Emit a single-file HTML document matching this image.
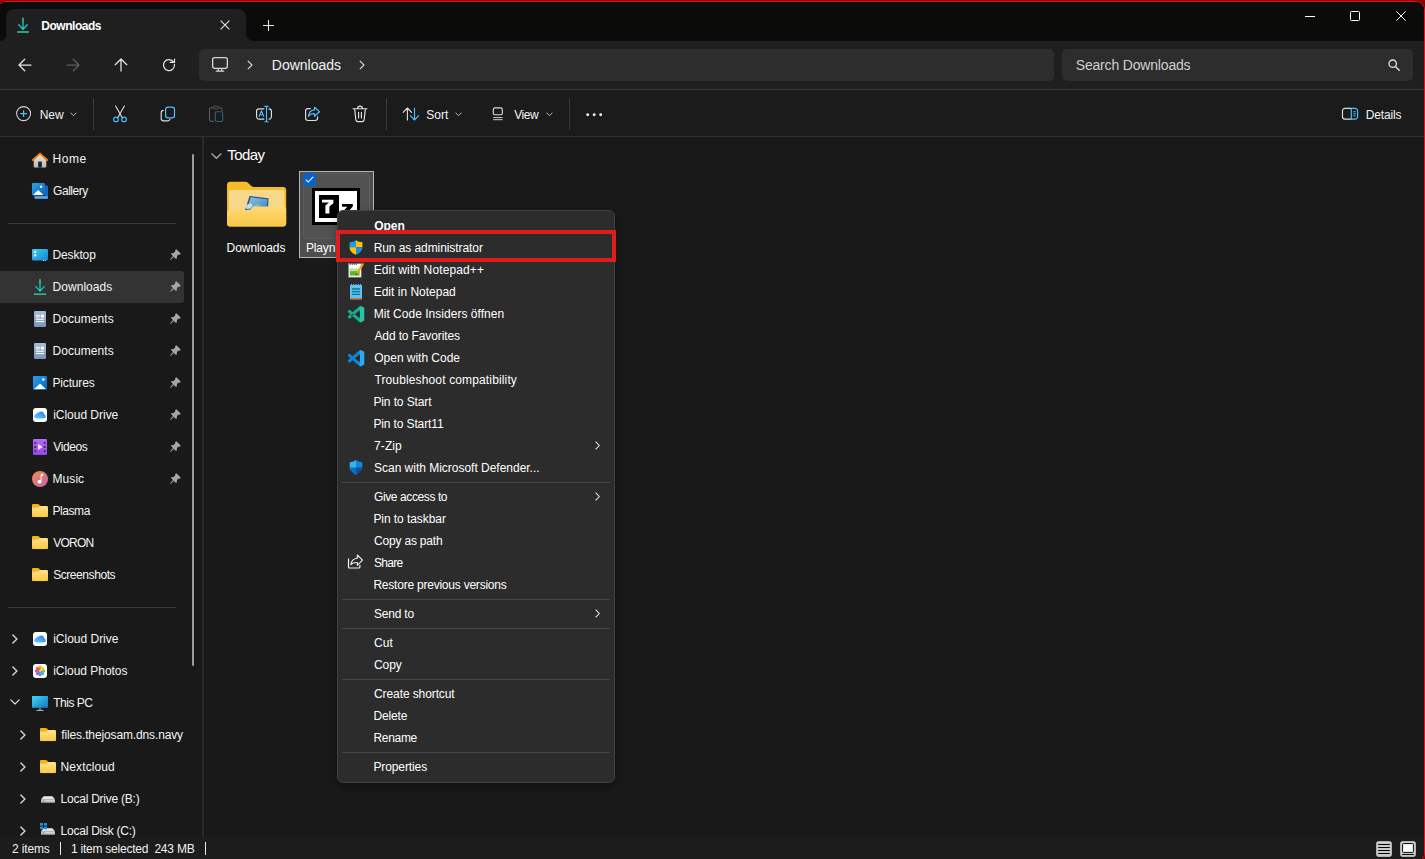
<!DOCTYPE html>
<html lang="en">
<head>
<meta charset="utf-8">
<title>Downloads - File Explorer</title>
<style>
*{box-sizing:border-box;margin:0;padding:0}
html,body{width:1425px;height:859px;overflow:hidden;background:#8a0000}
body{font-family:"Liberation Sans",sans-serif;font-size:12px;color:#fff;position:relative;-webkit-font-smoothing:antialiased}
.abs{position:absolute}
svg{display:block;overflow:visible}
/* window frame */
#frame{position:absolute;left:-3px;top:1px;width:1428px;height:861px;border:1px solid #e81123;border-radius:9px;background:#0b0b0a;overflow:hidden}
#win{position:absolute;left:2px;top:-2px;width:1425px;height:859px}
/* bars */
#tabstrip{left:0;top:2px;width:1424px;height:39px;background:#0b0b0a}
#tab{left:6px;top:9px;width:240px;height:32px;background:#201f1f;border-radius:8px 8px 0 0}
.flare{width:8px;height:8px;top:33px;background:#201f1f}
.flare i{display:block;width:8px;height:8px;background:#0b0b0a}
#navbar{left:0;top:41px;width:1424px;height:48px;background:#201f1f}
#addr{left:199px;top:49px;width:855px;height:32px;background:#2d2d2d;border-radius:5px}
#search{left:1062px;top:49px;width:350.500px;height:32px;background:#2d2d2d;border-radius:5px}
#navline{left:0;top:89px;width:1424px;height:1px;background:#3a3a3a}
#toolbar{left:0;top:90px;width:1424px;height:46px;background:#1b1b1b}
#toolline{left:0;top:136px;width:1424px;height:1px;background:#303030}
#main{left:0;top:137px;width:1424px;height:700px;background:#191919}
#sidediv{left:202px;top:137px;width:2px;height:700px;background:#292929}
#status{left:0;top:837px;width:1424px;height:22px;background:#1c1c1c}
.vsep{top:98px;width:1px;height:32px;background:#393939}
.tb{font-size:12px;color:#f4f4f4}
.st{color:#f4f4f4}
.mt{color:#fff}
.ss{color:#f0f0f0}
.t{position:absolute;white-space:nowrap;line-height:16px;height:16px}
/* per-text fitting */
#s0{letter-spacing:0.590px;margin-left:-0.51px}
#s1{letter-spacing:-0.477px;margin-left:0.11px}
#s2{letter-spacing:-0.113px;margin-left:-0.51px}
#s3{letter-spacing:0.055px;margin-left:-0.51px}
#s4{letter-spacing:0.064px;margin-left:-0.51px}
#s5{letter-spacing:0.064px;margin-left:-0.51px}
#s6{letter-spacing:-0.166px;margin-left:-0.51px}
#s7{letter-spacing:-0.017px;margin-left:0.13px}
#s8{letter-spacing:-0.374px;margin-left:0.26px}
#s9{letter-spacing:0.072px;margin-left:-0.51px}
#s10{letter-spacing:-0.431px;margin-left:-0.51px}
#s11{letter-spacing:-0.750px;margin-left:0.26px}
#s12{letter-spacing:-0.422px;margin-left:0.13px}
#s13{letter-spacing:-0.010px;margin-left:0.20px}
#s14{letter-spacing:-0.036px;margin-left:0.20px}
#s15{letter-spacing:-0.514px;margin-left:0.29px}
#s16{letter-spacing:-0.134px;margin-left:0.30px}
#s17{letter-spacing:0.106px;margin-left:-0.44px}
#s18{letter-spacing:-0.237px;margin-left:-0.44px}
#s19{letter-spacing:-0.247px;margin-left:-0.41px}
#m0{letter-spacing:-0.075px;margin-left:0.30px}
#m1{letter-spacing:-0.079px;margin-left:-0.32px}
#m2{letter-spacing:0.125px;margin-left:-0.32px}
#m3{letter-spacing:0.003px;margin-left:-0.32px}
#m4{letter-spacing:0.023px;margin-left:-0.32px}
#m5{letter-spacing:-0.127px;margin-left:0.49px}
#m6{letter-spacing:-0.031px;margin-left:0.30px}
#m7{letter-spacing:0.141px;margin-left:0.38px}
#m8{letter-spacing:-0.113px;margin-left:-0.60px}
#m9{letter-spacing:-0.127px;margin-left:-0.60px}
#m10{letter-spacing:0.100px;margin-left:0.04px}
#m11{letter-spacing:-0.016px;margin-left:0.00px}
#m12{letter-spacing:-0.399px;margin-left:0.04px}
#m13{letter-spacing:-0.066px;margin-left:-0.60px}
#m14{letter-spacing:-0.192px;margin-left:0.04px}
#m15{letter-spacing:-0.685px;margin-left:0.00px}
#m16{letter-spacing:-0.224px;margin-left:-0.60px}
#m17{letter-spacing:-0.212px;margin-left:0.00px}
#m18{letter-spacing:0.106px;margin-left:0.04px}
#m19{letter-spacing:-0.116px;margin-left:0.04px}
#m20{letter-spacing:-0.100px;margin-left:0.04px}
#m21{letter-spacing:-0.125px;margin-left:-0.60px}
#m22{letter-spacing:-0.300px;margin-left:-0.60px}
#m23{letter-spacing:-0.102px;margin-left:-0.60px}
#tnew{letter-spacing:-0.068px;margin-left:-0.32px}
#tsort{letter-spacing:0.008px;margin-left:-0.69px}
#tview{letter-spacing:-0.475px;margin-left:0.19px}
#tdet{letter-spacing:-0.140px;margin-left:-0.29px}
#tabtxt{letter-spacing:-0.485px;margin-left:0.32px}
#addrtxt{letter-spacing:-0.010px;margin-left:-0.19px}
#searchtxt{letter-spacing:-0.175px;margin-left:-0.28px}
#ctoday{letter-spacing:-0.517px;margin-left:0.16px}
#cdl{letter-spacing:-0.072px;margin-left:-0.42px}
#st0{letter-spacing:-0.154px;margin-left:0.04px}
#st1{letter-spacing:-0.226px;margin-left:-0.11px}
</style>
</head>
<body>
<div id="frame"><div id="win">

<div class="abs" id="tabstrip"></div>
<div class="abs" id="tab"></div>
<div class="abs flare" style="left:-1px"><i style="border-radius:0 0 8px 0"></i></div>
<div class="abs flare" style="left:246px"><i style="border-radius:0 0 0 8px"></i></div>
<div class="abs" id="navbar"></div>
<div class="abs" id="addr"></div>
<div class="abs" id="search"></div>
<div class="abs" id="navline"></div>
<div class="abs" id="toolbar"></div>
<div class="abs" id="toolline"></div>
<div class="abs" id="main"></div>
<div class="abs" id="sidediv"></div>
<div class="abs" id="status"></div>

<!-- tab icon: download arrow -->
<svg class="abs" style="left:16px;top:17px" width="14" height="16" viewBox="0 0 14 16"><defs><linearGradient id="gdl" x1="0" y1="0" x2="0" y2="1"><stop offset="0" stop-color="#3ddc97"/><stop offset=".75" stop-color="#12a5b8"/><stop offset="1" stop-color="#2fd39a"/></linearGradient></defs><path d="M7 .8v11.2M2.3 7.4L7 12.1l4.7-4.7" fill="none" stroke="url(#gdl)" stroke-width="1.5"/><path d="M1.2 15h11.6" stroke="#2fd39a" stroke-width="1.4"/></svg>
<div class="t" id="tabtxt" style="left:41px;top:18px;font-weight:700;font-size:12px;">Downloads</div>
<svg class="abs" style="left:220px;top:20px" width="10" height="10" viewBox="0 0 10 10"><path d="M.6.6l8.8 8.8M9.400.6L.6 9.400" stroke="#e4e4e4" stroke-width="1.1" fill="none"/></svg>
<svg class="abs" style="left:263px;top:20px" width="11" height="11" viewBox="0 0 11 11"><path d="M5.500 0v11M0 5.500h11" stroke="#e4e4e4" stroke-width="1.1" fill="none"/></svg>
<!-- window controls -->
<svg class="abs" style="left:1305px;top:16px" width="10" height="1" viewBox="0 0 10 1"><path d="M0 .5h10" stroke="#fff" stroke-width="1"/></svg>
<svg class="abs" style="left:1350px;top:11px" width="10" height="10" viewBox="0 0 10 10"><rect x=".5" y=".5" width="9" height="9" rx="1" fill="none" stroke="#fff" stroke-width="1"/></svg>
<svg class="abs" style="left:1396px;top:11px" width="10" height="10" viewBox="0 0 10 10"><path d="M.3.3l9.400 9.400M9.700.3L.3 9.700" stroke="#fff" stroke-width="1" fill="none"/></svg>

<!-- back -->
<svg class="abs" style="left:18px;top:58px" width="14" height="14" viewBox="0 0 14 14"><path d="M13 7H1.200M6.700 1.200L1 7l5.700 5.800" fill="none" stroke="#e6e6e6" stroke-width="1.25" stroke-linecap="round" stroke-linejoin="round"/></svg>
<!-- forward (disabled) -->
<svg class="abs" style="left:66px;top:58px" width="14" height="14" viewBox="0 0 14 14"><path d="M1 7h11.800M7.300 1.200L13 7l-5.700 5.800" fill="none" stroke="#5f5f5f" stroke-width="1.25" stroke-linecap="round" stroke-linejoin="round"/></svg>
<!-- up -->
<svg class="abs" style="left:114px;top:58px" width="14" height="14" viewBox="0 0 14 14"><path d="M7 13V1.200M1.200 6.700L7 1l5.800 5.700" fill="none" stroke="#e6e6e6" stroke-width="1.25" stroke-linecap="round" stroke-linejoin="round"/></svg>
<!-- refresh -->
<svg class="abs" style="left:162px;top:58px" width="14" height="14" viewBox="0 0 14 14"><path d="M12.450 6.400A5.500 5.500 0 1 1 11.700 4.200M8.200 4.400H12.500V1.100" fill="none" stroke="#e6e6e6" stroke-width="1.2" stroke-linecap="round" stroke-linejoin="round"/></svg>
<!-- monitor -->
<svg class="abs" style="left:212px;top:57px" width="16" height="15" viewBox="0 0 16 15"><rect x=".65" y=".65" width="14.700" height="10.700" rx="2" fill="none" stroke="#d8d8d8" stroke-width="1.3"/><path d="M6.300 11.400v2.400M9.700 11.400v2.400M3.800 14.200h8.400" stroke="#d8d8d8" stroke-width="1.2" fill="none"/></svg>
<svg class="abs" style="left:247px;top:60px" width="6" height="10" viewBox="0 0 6 10"><path d="M.8.800L5 5 .8 9.200" fill="none" stroke="#dcdcdc" stroke-width="1.1"/></svg>
<div class="t" id="addrtxt" style="left:272px;top:55px;font-size:14px;line-height:20px;height:20px;color:#f2f2f2">Downloads</div>
<svg class="abs" style="left:359px;top:60px" width="6" height="10" viewBox="0 0 6 10"><path d="M.8.800L5 5 .8 9.200" fill="none" stroke="#dcdcdc" stroke-width="1.1"/></svg>
<div class="t" id="searchtxt" style="left:1076px;top:55px;font-size:14px;line-height:20px;height:20px;color:#cfcfcf">Search Downloads</div>
<svg class="abs" style="left:1388px;top:59px" width="12" height="12" viewBox="0 0 12 12"><circle cx="4.700" cy="4.700" r="3.700" fill="none" stroke="#e0e0e0" stroke-width="1.3"/><path d="M7.500 7.500l3.700 3.700" stroke="#e0e0e0" stroke-width="1.400" stroke-linecap="round"/></svg>

<!-- New -->
<svg class="abs" style="left:16px;top:106px" width="16" height="16" viewBox="0 0 16 16"><circle cx="7.600" cy="7.600" r="7" fill="none" stroke="#d6d6d6" stroke-width="1.05"/><path d="M7.600 4.200v6.800M4.200 7.600h6.800" stroke="#4cc2ff" stroke-width="1.15" fill="none"/></svg>
<div class="t tb" id="tnew" style="left:40px;top:107px">New</div>
<svg class="abs" style="left:70px;top:112px" width="7" height="5" viewBox="0 0 7 5"><path d="M.6.700l2.900 3 2.900-3" fill="none" stroke="#b8b8b8" stroke-width="1"/></svg>
<div class="abs vsep" style="left:93px"></div>
<!-- Cut -->
<svg class="abs" style="left:112px;top:105px" width="16" height="18" viewBox="0 0 16 18"><path d="M3.600 1l6.700 11.700M12.400 1L5.700 12.700" stroke="#e2e2e2" stroke-width="1.1" fill="none" stroke-linecap="round"/><circle cx="4" cy="14.400" r="2.300" fill="none" stroke="#4cc2ff" stroke-width="1.15"/><circle cx="12" cy="14.400" r="2.300" fill="none" stroke="#4cc2ff" stroke-width="1.15"/></svg>
<!-- Copy -->
<svg class="abs" style="left:160px;top:106px" width="16" height="16" viewBox="0 0 16 16"><path d="M3.300 4.400A2.300 2.300 0 0 0 1.200 6.700v5.800a2.400 2.400 0 0 0 2.400 2.400h4.200a2.300 2.300 0 0 0 2.200-1.700" fill="none" stroke="#dedede" stroke-width="1.15" stroke-linecap="round"/><rect x="5.600" y="1.100" width="8.900" height="10.700" rx="2.300" fill="none" stroke="#4cc2ff" stroke-width="1.2"/></svg>
<!-- Paste (disabled) -->
<svg class="abs" style="left:208px;top:105px" width="16" height="18" viewBox="0 0 16 18"><path d="M5.200 2.700H3.400A1.900 1.900 0 0 0 1.500 4.600v9.900a1.900 1.900 0 0 0 1.900 1.900h2.200M10.800 2.700h1.400a1.900 1.900 0 0 1 1.900 1.900v1.200" fill="none" stroke="#5c5c5c" stroke-width="1.1"/><rect x="5.100" y="1.300" width="5.700" height="2.500" rx="1.200" fill="none" stroke="#5c5c5c" stroke-width="1"/><rect x="7.300" y="6.700" width="7.400" height="9.800" rx="1.500" fill="none" stroke="#2b6283" stroke-width="1.15"/></svg>
<!-- Rename -->
<svg class="abs" style="left:255px;top:105px" width="18" height="18" viewBox="0 0 18 18"><path d="M9.300 3.900H3.900A2.300 2.300 0 0 0 1.600 6.200v5.600a2.300 2.300 0 0 0 2.300 2.300h5.400M13.600 3.900h.5a2.300 2.300 0 0 1 2.300 2.300v5.600a2.300 2.300 0 0 1-2.300 2.300h-.5" fill="none" stroke="#dedede" stroke-width="1.15"/><path d="M11.500 1.300v15.400M9.500 1.300h4M9.500 16.700h4" stroke="#4cc2ff" stroke-width="1.15" fill="none"/><path d="M4 11.700L6.450 5.800 8.900 11.700M4.900 9.700h3.100" fill="none" stroke="#4cc2ff" stroke-width="1.050" stroke-linejoin="round"/></svg>
<!-- Share -->
<svg class="abs" style="left:304px;top:106px" width="17" height="16" viewBox="0 0 17 16"><path d="M6.400 2.600H4A2.400 2.400 0 0 0 1.600 5v7.100a2.400 2.400 0 0 0 2.400 2.400h7.200a2.400 2.400 0 0 0 2.400-2.400v-1.300" fill="none" stroke="#dedede" stroke-width="1.15" stroke-linecap="round"/><path d="M10.500 1.300l5 4.500-5 4.500V7.700C7.700 7.500 5.700 8.400 4.400 10.400c.3-3.700 2.500-6.200 6.100-6.500z" fill="none" stroke="#4cc2ff" stroke-width="1.15" stroke-linejoin="round"/></svg>
<!-- Delete -->
<svg class="abs" style="left:352px;top:105px" width="16" height="18" viewBox="0 0 16 18"><path d="M1 3.700h14M5.600 3.500a2.400 2.400 0 0 1 4.800 0M2.600 3.900l1.300 11a2 2 0 0 0 2 1.700h4.200a2 2 0 0 0 2-1.700l1.300-11M6.600 7.300v5.600M9.400 7.300v5.600" fill="none" stroke="#e2e2e2" stroke-width="1.15" stroke-linecap="round"/></svg>
<div class="abs vsep" style="left:386px"></div>
<!-- Sort -->
<svg class="abs" style="left:402px;top:107px" width="18" height="14" viewBox="0 0 18 14"><path d="M5.400 13V1.200M1.200 5.300L5.400 1l4.200 4.300" fill="none" stroke="#e2e2e2" stroke-width="1.1" stroke-linecap="round" stroke-linejoin="round"/><path d="M12.500 1v11.800M8.300 8.700l4.200 4.300 4.200-4.300" fill="none" stroke="#4cc2ff" stroke-width="1.1" stroke-linecap="round" stroke-linejoin="round"/></svg>
<div class="t tb" id="tsort" style="left:427px;top:107px">Sort</div>
<svg class="abs" style="left:455px;top:112px" width="7" height="5" viewBox="0 0 7 5"><path d="M.6.700l2.900 3 2.900-3" fill="none" stroke="#b8b8b8" stroke-width="1"/></svg>
<!-- View -->
<svg class="abs" style="left:492px;top:107px" width="12" height="14" viewBox="0 0 12 14"><rect x="1.300" y=".900" width="9" height="6.800" rx="1.500" fill="none" stroke="#dedede" stroke-width="1.1"/><path d="M1.600 10.600h8.600M1.600 12.700h8.600" stroke="#dedede" stroke-width=".900" fill="none" stroke-linecap="round"/></svg>
<div class="t tb" id="tview" style="left:514px;top:107px">View</div>
<svg class="abs" style="left:546px;top:112px" width="7" height="5" viewBox="0 0 7 5"><path d="M.6.700l2.900 3 2.900-3" fill="none" stroke="#b8b8b8" stroke-width="1"/></svg>
<div class="abs vsep" style="left:569px"></div>
<svg class="abs" style="left:586px;top:113px" width="17" height="4" viewBox="0 0 17 4"><circle cx="1.700" cy="1.800" r="1.450" fill="#f0f0f0"/><circle cx="8.200" cy="1.800" r="1.450" fill="#f0f0f0"/><circle cx="14.700" cy="1.800" r="1.450" fill="#f0f0f0"/></svg>
<!-- Details -->
<svg class="abs" style="left:1341px;top:107px" width="18" height="14" viewBox="0 0 18 14"><path d="M10.300 1.400H3.900A2.400 2.400 0 0 0 1.500 3.800v5.900a2.400 2.400 0 0 0 2.400 2.400h6.400" fill="none" stroke="#dedede" stroke-width="1.15"/><path d="M10.300 1.400v10.700h3.900a2.400 2.400 0 0 0 2.400-2.400V3.800a2.400 2.400 0 0 0-2.400-2.400z" fill="none" stroke="#4cc2ff" stroke-width="1.15"/><path d="M12.400 4.700h2.300M12.400 6.750h2.300M12.400 8.800h2.300" stroke="#4cc2ff" stroke-width="1" fill="none"/></svg>
<div class="t tb" id="tdet" style="left:1366px;top:107px">Details</div>


<svg width="0" height="0" style="position:absolute"><defs>
<linearGradient id="gfold" x1="0" y1="0" x2="0" y2="1"><stop offset="0" stop-color="#ffe08a"/><stop offset="1" stop-color="#fbc843"/></linearGradient>
<linearGradient id="gdesk" x1="0" y1="0" x2="1" y2="1"><stop offset="0" stop-color="#3fd0f5"/><stop offset="1" stop-color="#1580d0"/></linearGradient>
<linearGradient id="gpic" x1="0" y1="0" x2="1" y2="1"><stop offset="0" stop-color="#2aa4ee"/><stop offset="1" stop-color="#0a62bd"/></linearGradient>
<linearGradient id="gdoc" x1="0" y1="0" x2="0" y2="1"><stop offset="0" stop-color="#a9bdd6"/><stop offset="1" stop-color="#7893b6"/></linearGradient>
<linearGradient id="gvid" x1="0" y1="0" x2="0" y2="1"><stop offset="0" stop-color="#b36bf6"/><stop offset="1" stop-color="#9548e6"/></linearGradient>
<linearGradient id="gmus" x1="0" y1="0" x2="1" y2="1"><stop offset="0" stop-color="#f08d4e"/><stop offset="1" stop-color="#c463ad"/></linearGradient>
<linearGradient id="gcloud" x1="0" y1="1" x2="1" y2="0"><stop offset="0" stop-color="#6fd0fb"/><stop offset="1" stop-color="#2276f2"/></linearGradient>
<linearGradient id="gpc" x1="0" y1="0" x2="1" y2="1"><stop offset="0" stop-color="#38dcf2"/><stop offset="1" stop-color="#1672bd"/></linearGradient>
<linearGradient id="ghome" x1="0" y1="0" x2="0" y2="1"><stop offset="0" stop-color="#e4e4e4"/><stop offset="1" stop-color="#b9b9b9"/></linearGradient>
<linearGradient id="gdrv" x1="0" y1="0" x2="0" y2="1"><stop offset="0" stop-color="#e8e8e8"/><stop offset="1" stop-color="#a8a8a8"/></linearGradient>
<symbol id="i-folder" viewBox="0 0 16 13.200"><path d="M0 1.300A1.300 1.300 0 0 1 1.300 0h4.400c.5 0 .9.200 1.200.500L8.600 2.300V5H0z" fill="#f4b40e"/><path d="M0 4.900A1.300 1.300 0 0 1 1.300 3.600h4.500c.5 0 .9-.200 1.200-.500l.6-.600c.3-.300.700-.500 1.200-.500h5.900A1.300 1.300 0 0 1 16 3.300v8.600a1.300 1.300 0 0 1-1.300 1.300H1.300A1.300 1.300 0 0 1 0 11.900z" fill="url(#gfold)"/></symbol>
<symbol id="i-pin" viewBox="0 0 11 11"><g transform="translate(8.600 2.300) rotate(45)" fill="#9ba8b0"><path d="M-3.200.600Q-3.200 0-2.600 0H2.600Q3.200 0 3.200.600V1.700Q3.200 2.300 2.400 2.300L2.200 4.600Q3.800 5.600 3.800 7.300H-3.800Q-3.800 5.600-2.200 4.600L-2.400 2.300Q-3.200 2.300-3.200 1.700Z"/><path d="M-.700 7.200H.700L.25 12.100H-.25Z"/></g></symbol>
<symbol id="i-chev" viewBox="0 0 6 10"><path d="M.9 1.100L4.900 5 .9 8.900" fill="none" stroke="#d6d6d6" stroke-width="1.400" stroke-linecap="round" stroke-linejoin="round"/></symbol>
<symbol id="i-doc" viewBox="0 0 12 16"><rect x="0" y="0" width="12" height="16" rx="1.200" fill="url(#gdoc)"/><path d="M2 4.300h3.700M2 6h3.700M2 8.300h8M2 10.600h8" stroke="#fff" stroke-width="1"/><rect x="6.900" y="3.700" width="3.100" height="3" fill="#fff"/></symbol>
<symbol id="i-icloud" viewBox="0 0 14 14"><rect x="0" y="0" width="14" height="14" rx="3" fill="#fff"/><path d="M3.600 10.600a2.300 2.300 0 0 1-.3-4.600 2.100 2.100 0 0 1 2.600-1.400 3.100 3.100 0 0 1 5.500 1.900 2.100 2.100 0 0 1-.4 4.100z" fill="url(#gcloud)"/></symbol>
<symbol id="i-pic" viewBox="0 0 14 14"><rect x="0" y="0" width="14" height="14" rx="1.200" fill="url(#gpic)"/><path d="M1.200 12.900L7 7.400l5.800 5.500z" fill="#fff"/><circle cx="10.300" cy="3.500" r="1.300" fill="#fff"/></symbol>
<symbol id="i-drive" viewBox="0 0 14 7"><path d="M2.600.300h8.800L14 3.400H0z" fill="#efefef"/><rect x="0" y="3.200" width="14" height="3.600" rx=".500" fill="url(#gdrv)"/><rect x="0" y="3.200" width="14" height="3.600" rx=".500" fill="none" stroke="#8a8a8a" stroke-width=".500"/><circle cx="2.500" cy="5" r=".800" fill="#22c04a"/></symbol>
</defs></svg>

<div class="abs" style="left:0;top:271px;width:184px;height:32px;background:#333333;border-radius:0 3px 3px 0"></div>
<div class="abs" style="left:192px;top:154px;width:2px;height:512px;background:#9c9c9c;border-radius:1px"></div>
<div class="abs" style="left:8px;top:223px;width:168px;height:1px;background:#3a3a3a"></div>
<div class="abs" style="left:8px;top:607px;width:168px;height:1px;background:#3a3a3a"></div>
<svg class="abs" style="left:32px;top:151.500px" width="16" height="16" viewBox="0 0 16 16"><path d="M1.700 7.200L8 2.200l6.300 5V14.500a1 1 0 0 1-1 1H2.700A1 1 0 0 1 1.700 14.500z" fill="url(#ghome)"/><rect x="6.200" y="9.600" width="3.600" height="5.900" fill="#1e1e1e"/><path d="M.8 8L8 1.600 15.200 8" fill="none" stroke="#f07c12" stroke-width="1.900" stroke-linecap="round" stroke-linejoin="round"/></svg>
<div class="t st" id="s0" style="left:53px;top:151px">Home</div>
<svg class="abs" style="left:32px;top:183px" width="16" height="16" viewBox="0 0 16 16"><rect x="2.400" y="2.200" width="13.600" height="13.600" rx="1.500" fill="#1667bd"/><rect x="2.400" y="13.300" width="13.600" height="2.500" rx="1" fill="#5aa7ea"/><rect x="0" y="0" width="13" height="13" rx="1.300" fill="url(#gpic)"/><path d="M.8 12.300L6.200 7l5.600 5.300z" fill="#fff"/><rect x="8" y="2.700" width="2.100" height="2.100" fill="#fff"/><path d="M0 12.400h13" stroke="#111" stroke-width=".600"/></svg>
<div class="t st" id="s1" style="left:53px;top:183px">Gallery</div>
<svg class="abs" style="left:32px;top:249px" width="16" height="12" viewBox="0 0 16 12"><rect x="0" y="0" width="16" height="11.400" rx="1.400" fill="url(#gdesk)"/><rect x="2.200" y="2.100" width="2" height="2" fill="#fff"/><rect x="2.200" y="5.300" width="2" height="2" fill="#fff"/><rect x="10.900" y="10.800" width="1" height="1" fill="#fff"/><rect x="12.900" y="10.800" width="1" height="1" fill="#fff"/></svg>
<div class="t st" id="s2" style="left:53px;top:247px">Desktop</div>
<svg class="abs" style="left:170px;top:249px" width="11" height="11"><use href="#i-pin" width="11" height="11"/></svg>
<svg class="abs" style="left:34px;top:279px" width="12" height="16" viewBox="0 0 12 16"><path d="M6 .3v11.500M1.400 7.300L6 11.900l4.600-4.600" fill="none" stroke="url(#gdl)" stroke-width="1.500"/><path d="M0 15.200h12" stroke="#2fd39a" stroke-width="1.400"/></svg>
<div class="t st" id="s3" style="left:53px;top:279px">Downloads</div>
<svg class="abs" style="left:170px;top:281px" width="11" height="11"><use href="#i-pin" width="11" height="11"/></svg>
<svg class="abs" style="left:34px;top:311px" width="12" height="16"><use href="#i-doc" width="12" height="16"/></svg>
<div class="t st" id="s4" style="left:53px;top:311px">Documents</div>
<svg class="abs" style="left:170px;top:313px" width="11" height="11"><use href="#i-pin" width="11" height="11"/></svg>
<svg class="abs" style="left:34px;top:343px" width="12" height="16"><use href="#i-doc" width="12" height="16"/></svg>
<div class="t st" id="s5" style="left:53px;top:343px">Documents</div>
<svg class="abs" style="left:170px;top:345px" width="11" height="11"><use href="#i-pin" width="11" height="11"/></svg>
<svg class="abs" style="left:33px;top:376px" width="14" height="14"><use href="#i-pic" width="14" height="14"/></svg>
<div class="t st" id="s6" style="left:53px;top:375px">Pictures</div>
<svg class="abs" style="left:170px;top:377px" width="11" height="11"><use href="#i-pin" width="11" height="11"/></svg>
<svg class="abs" style="left:33px;top:408px" width="14" height="14"><use href="#i-icloud" width="14" height="14"/></svg>
<div class="t st" id="s7" style="left:53px;top:407px">iCloud Drive</div>
<svg class="abs" style="left:170px;top:409px" width="11" height="11"><use href="#i-pin" width="11" height="11"/></svg>
<svg class="abs" style="left:33px;top:439px" width="14" height="16" viewBox="0 0 14 16"><rect x="0" y="0" width="14" height="16" rx="1.200" fill="url(#gvid)"/><g fill="#3b2163"><rect x="1.400" y="3" width="1.800" height="1.800" rx=".400"/><rect x="1.400" y="7.100" width="1.800" height="1.800" rx=".400"/><rect x="1.400" y="11.200" width="1.800" height="1.800" rx=".400"/><rect x="10.800" y="3" width="1.800" height="1.800" rx=".400"/><rect x="10.800" y="7.100" width="1.800" height="1.800" rx=".400"/><rect x="10.800" y="11.200" width="1.800" height="1.800" rx=".400"/></g><path d="M5 4.900l4.600 3.100L5 11.100z" fill="#f4ecff"/></svg>
<div class="t st" id="s8" style="left:53px;top:439px">Videos</div>
<svg class="abs" style="left:170px;top:441px" width="11" height="11"><use href="#i-pin" width="11" height="11"/></svg>
<svg class="abs" style="left:32px;top:471px" width="16" height="16" viewBox="0 0 16 16"><circle cx="8" cy="8" r="8" fill="url(#gmus)"/><path d="M8.600 3.400l2.600-.9v2.300l-1.700.6v5.300a2 1.700 0 1 1-.9-1.400z" fill="#fff"/></svg>
<div class="t st" id="s9" style="left:53px;top:471px">Music</div>
<svg class="abs" style="left:170px;top:473px" width="11" height="11"><use href="#i-pin" width="11" height="11"/></svg>
<svg class="abs" style="left:32px;top:504px" width="16" height="13.2"><use href="#i-folder" width="16" height="13.2"/></svg>
<div class="t st" id="s10" style="left:53px;top:503px">Plasma</div>
<svg class="abs" style="left:32px;top:536px" width="16" height="13.2"><use href="#i-folder" width="16" height="13.2"/></svg>
<div class="t st" id="s11" style="left:53px;top:535px">VORON</div>
<svg class="abs" style="left:32px;top:568px" width="16" height="13.2"><use href="#i-folder" width="16" height="13.2"/></svg>
<div class="t st" id="s12" style="left:53px;top:567px">Screenshots</div>
<svg class="abs" style="left:12px;top:634px" width="6" height="10"><use href="#i-chev" width="6" height="10"/></svg>
<svg class="abs" style="left:33px;top:632px" width="14" height="14"><use href="#i-icloud" width="14" height="14"/></svg>
<div class="t st" id="s13" style="left:53px;top:631px">iCloud Drive</div>
<svg class="abs" style="left:12px;top:666px" width="6" height="10"><use href="#i-chev" width="6" height="10"/></svg>
<svg class="abs" style="left:33px;top:664px" width="14" height="14" viewBox="0 0 14 14"><rect width="14" height="14" rx="3" fill="#fff"/><g opacity=".9"><ellipse cx="7" cy="4" rx="1.700" ry="2.400" fill="#f6a313"/><ellipse cx="7" cy="10" rx="1.700" ry="2.400" fill="#3b8fe6"/><ellipse cx="4" cy="7" rx="2.400" ry="1.700" fill="#d94a8c"/><ellipse cx="10" cy="7" rx="2.400" ry="1.700" fill="#6bbf3b"/><ellipse cx="4.900" cy="4.900" rx="1.700" ry="2.300" transform="rotate(-45 4.900 4.900)" fill="#ee4a35"/><ellipse cx="9.100" cy="4.900" rx="1.700" ry="2.300" transform="rotate(45 9.100 4.900)" fill="#e8d21a"/><ellipse cx="4.900" cy="9.100" rx="1.700" ry="2.300" transform="rotate(45 4.900 9.100)" fill="#8a5bd6"/><ellipse cx="9.100" cy="9.100" rx="1.700" ry="2.300" transform="rotate(-45 9.100 9.100)" fill="#2fb7a5"/></g></svg>
<div class="t st" id="s14" style="left:53px;top:663px">iCloud Photos</div>
<svg class="abs" style="left:10px;top:699px" width="10" height="6" viewBox="0 0 10 6"><path d="M.8.800L5 5 9.200.8" fill="none" stroke="#e0e0e0" stroke-width="1.150" stroke-linecap="round" stroke-linejoin="round"/></svg>
<svg class="abs" style="left:32px;top:696px" width="16" height="15" viewBox="0 0 16 15"><rect x="0" y="0" width="16" height="11.800" rx=".600" fill="url(#gpc)"/><path d="M8 11.800v2.400M4.600 14.400h6.800" stroke="#b9c4cc" stroke-width="1"/></svg>
<div class="t st" id="s15" style="left:53px;top:695px">This PC</div>
<svg class="abs" style="left:20px;top:730px" width="6" height="10"><use href="#i-chev" width="6" height="10"/></svg>
<svg class="abs" style="left:40px;top:728px" width="16" height="13.2"><use href="#i-folder" width="16" height="13.2"/></svg>
<div class="t st" id="s16" style="left:61px;top:727px">files.thejosam.dns.navy</div>
<svg class="abs" style="left:20px;top:762px" width="6" height="10"><use href="#i-chev" width="6" height="10"/></svg>
<svg class="abs" style="left:40px;top:760px" width="16" height="13.2"><use href="#i-folder" width="16" height="13.2"/></svg>
<div class="t st" id="s17" style="left:61px;top:759px">Nextcloud</div>
<svg class="abs" style="left:20px;top:794px" width="6" height="10"><use href="#i-chev" width="6" height="10"/></svg>
<svg class="abs" style="left:41px;top:796px" width="14" height="7"><use href="#i-drive" width="14" height="7"/></svg>
<div class="t st" id="s18" style="left:61px;top:791px">Local Drive (B:)</div>
<svg class="abs" style="left:20px;top:826px" width="6" height="10"><use href="#i-chev" width="6" height="10"/></svg>
<svg class="abs" style="left:41px;top:828px" width="14" height="7"><use href="#i-drive" width="14" height="7"/></svg>
<svg class="abs" style="left:40px;top:823px" width="7" height="7" viewBox="0 0 7 7"><g fill="#1e90e8"><rect x="0" y="0" width="3" height="2.700"/><rect x="4" y="0" width="3" height="2.700"/><rect x="0" y="3.600" width="3" height="2.700"/><rect x="4" y="3.600" width="3" height="2.700"/></g></svg>
<div class="t st" id="s19" style="left:61px;top:823px">Local Disk (C:)</div>

<!-- group header -->
<svg class="abs" style="left:211px;top:153px" width="11" height="6" viewBox="0 0 11 6"><path d="M.5.500L5.400 5.300 10.300.5" fill="none" stroke="#acacac" stroke-width="1.200"/></svg>
<div class="t" id="ctoday" style="left:227px;top:145px;font-size:15px;line-height:20px;height:20px;color:#fff">Today</div>
<!-- big folder -->
<svg class="abs" style="left:227px;top:181px" width="60" height="47" viewBox="0 0 60 47"><defs><linearGradient id="gbf1" x1="0" y1="0" x2="0" y2="1"><stop offset="0" stop-color="#f7bd2c"/><stop offset="1" stop-color="#f2b21a"/></linearGradient><linearGradient id="gbf2" x1="0" y1="0" x2="0" y2="1"><stop offset="0" stop-color="#fed972"/><stop offset="1" stop-color="#f9c646"/></linearGradient><linearGradient id="gimg" x1="0" y1="0" x2="1" y2="1"><stop offset="0" stop-color="#8cc6ee"/><stop offset="1" stop-color="#3b82c4"/></linearGradient></defs>
<path d="M0 4.200A3.400 3.400 0 0 1 3.400.800H18.500a4 4 0 0 1 2.700 1.100l3.100 3.100a4 4 0 0 0 2.700 1.100H55.800A3.400 3.400 0 0 1 59.200 9.500V42a3.400 3.400 0 0 1-3.400 3.400H3.400A3.400 3.400 0 0 1 0 42z" fill="url(#gbf1)"/>
<rect x="1.800" y="9" width="55.600" height="24" rx="2" fill="#f6d88b"/>
<path d="M22.500 15l19 2.200-.5 12H18z" fill="#35536f"/><path d="M23.700 16.300l16.600 1.900-.4 10.300H20z" fill="url(#gimg)"/><ellipse cx="21.800" cy="25.200" rx="3.600" ry="2.200" fill="#dbe7ee" opacity=".85" transform="rotate(-28 21.800 25.200)"/><path d="M24 27.500c3-2.400 6-3.600 9-3.600" stroke="#8fd07c" stroke-width="1.400" fill="none"/>
<path d="M0 32.300a3.400 3.400 0 0 1 3.400-3.400H21.500a4 4 0 0 0 2.600-1l1.500-1.300a4 4 0 0 1 2.600-1H55.800a3.400 3.400 0 0 1 3.400 3.400V42.200a3.400 3.400 0 0 1-3.400 3.400H3.400A3.400 3.400 0 0 1 0 42.200z" fill="url(#gbf2)"/>
</svg>
<div class="t" id="cdl" style="left:227px;top:240px;color:#fff">Downloads</div>
<!-- selected item -->
<div class="abs" style="left:299px;top:171px;width:75px;height:87px;background:#4e4e4e;border:1px solid #b4b4b4"></div>
<div class="abs" style="left:303px;top:173px;width:67px;height:66px;border:1px solid #5c5c5c;border-radius:3px;background:#525252"></div>
<div class="abs" style="left:303px;top:173px;width:13px;height:13px;background:#0a62c8;border-radius:3px"></div>
<svg class="abs" style="left:305px;top:176px" width="9" height="7" viewBox="0 0 9 7"><path d="M.8 3.600l2.400 2.400L8.200.900" fill="none" stroke="#fff" stroke-width="1.050"/></svg>
<!-- 7z icon -->
<div class="abs" style="left:312px;top:188px;width:48px;height:37px;background:#000"></div>
<div class="abs" style="left:315px;top:191px;width:42px;height:31px;background:#fff"></div>
<div class="abs" style="left:319px;top:195px;width:20px;height:23px;background:#000"></div>
<svg class="abs" style="left:319px;top:195px" width="38" height="23" viewBox="0 0 38 23"><path d="M3 4.800h11.400v3.400l-4 3.400v6.800H6.400V10.400l3.600-2.800H3z" fill="#fff"/><path d="M23 8.900h10.800v2.600l-5.600 6.200h5.600v2.900H22.600v-2.600l5.800-6.200H23z" fill="#000"/></svg>
<div class="t" id="cplay" style="left:306px;top:240px;color:#fff;letter-spacing:-.17px">Playni</div>

<div class="abs" id="menu" style="left:337px;top:210px;width:278px;height:573px;background:#2c2c2c;border:1px solid #414141;border-radius:6px;box-shadow:0 4px 10px rgba(0,0,0,.28)"></div>
<div class="t mt" id="m0" style="left:374px;top:218px;font-weight:700;">Open</div>
<div class="t mt" id="m1" style="left:374px;top:240px;">Run as administrator</div>
<div class="t mt" id="m2" style="left:374px;top:262px;">Edit with Notepad++</div>
<div class="t mt" id="m3" style="left:374px;top:284px;">Edit in Notepad</div>
<div class="t mt" id="m4" style="left:374px;top:306px;">Mit Code Insiders öffnen</div>
<div class="t mt" id="m5" style="left:374px;top:328px;">Add to Favorites</div>
<div class="t mt" id="m6" style="left:374px;top:350px;">Open with Code</div>
<div class="t mt" id="m7" style="left:374px;top:372px;">Troubleshoot compatibility</div>
<div class="t mt" id="m8" style="left:374px;top:394px;">Pin to Start</div>
<div class="t mt" id="m9" style="left:374px;top:416px;">Pin to Start11</div>
<div class="t mt" id="m10" style="left:374px;top:438px;">7-Zip</div>
<div class="t mt" id="m11" style="left:374px;top:460px;">Scan with Microsoft Defender...</div>
<div class="t mt" id="m12" style="left:374px;top:489px;">Give access to</div>
<div class="t mt" id="m13" style="left:374px;top:511px;">Pin to taskbar</div>
<div class="t mt" id="m14" style="left:374px;top:533px;">Copy as path</div>
<div class="t mt" id="m15" style="left:374px;top:555px;">Share</div>
<div class="t mt" id="m16" style="left:374px;top:577px;">Restore previous versions</div>
<div class="t mt" id="m17" style="left:374px;top:606px;">Send to</div>
<div class="t mt" id="m18" style="left:374px;top:635px;">Cut</div>
<div class="t mt" id="m19" style="left:374px;top:657px;">Copy</div>
<div class="t mt" id="m20" style="left:374px;top:686px;">Create shortcut</div>
<div class="t mt" id="m21" style="left:374px;top:708px;">Delete</div>
<div class="t mt" id="m22" style="left:374px;top:730px;">Rename</div>
<div class="t mt" id="m23" style="left:374px;top:759px;">Properties</div>
<div class="abs" style="left:342px;top:482px;width:268px;height:1px;background:#474747"></div>
<div class="abs" style="left:342px;top:599px;width:268px;height:1px;background:#474747"></div>
<div class="abs" style="left:342px;top:628px;width:268px;height:1px;background:#474747"></div>
<div class="abs" style="left:342px;top:679px;width:268px;height:1px;background:#474747"></div>
<div class="abs" style="left:342px;top:752px;width:268px;height:1px;background:#474747"></div>
<svg class="abs" style="left:595px;top:441px" width="5" height="9" viewBox="0 0 5 9"><path d="M.6.600L4.300 4.500.6 8.400" fill="none" stroke="#e6e6e6" stroke-width="1.050"/></svg>
<svg class="abs" style="left:595px;top:492px" width="5" height="9" viewBox="0 0 5 9"><path d="M.6.600L4.300 4.500.6 8.400" fill="none" stroke="#e6e6e6" stroke-width="1.050"/></svg>
<svg class="abs" style="left:595px;top:609px" width="5" height="9" viewBox="0 0 5 9"><path d="M.6.600L4.300 4.500.6 8.400" fill="none" stroke="#e6e6e6" stroke-width="1.050"/></svg>
<svg class="abs" style="left:349px;top:240px" width="14" height="15" viewBox="0 0 14 15"><defs><clipPath id="csh"><path d="M7 .3C5.300 1.600 3.300 2.200.6 2.300V7.300C.6 10.800 3.300 13.300 7 14.800 10.700 13.300 13.400 10.800 13.400 7.300V2.300C10.700 2.200 8.700 1.600 7 .3z"/></clipPath></defs><g clip-path="url(#csh)"><rect x="0" y="0" width="7" height="7.200" fill="#1e9be8"/><rect x="7" y="0" width="7" height="7.200" fill="#fbc50f"/><rect x="0" y="7.200" width="7" height="8" fill="#fbc50f"/><rect x="7" y="7.200" width="7" height="8" fill="#1e8fe0"/></g></svg>
<svg class="abs" style="left:348px;top:262px" width="16" height="16" viewBox="0 0 16 16"><rect x=".6" y="1.600" width="12.600" height="13.600" fill="#fdfdfd" stroke="#8a8a8a" stroke-width=".700"/><path d="M2.300 1v2M4.300 1v2M6.300 1v2M8.300 1v2" stroke="#444" stroke-width=".900"/><rect x="1.800" y="6.800" width="9.800" height="6.800" fill="#56b82e"/><rect x="1.800" y="6.800" width="9.800" height="2.400" fill="#b9e38f"/><path d="M14.200 1L8.200 11 7.500 13.500 9.900 12.100 16 2.200z" fill="#f2a71b"/><path d="M14.200 1l1.800 1.200.6-1.100L15 .1z" fill="#c4242b"/><path d="M8.200 11L7.500 13.500 9.900 12.100z" fill="#5a4524"/></svg>
<svg class="abs" style="left:350px;top:284px" width="12" height="16" viewBox="0 0 12 16"><rect x="0" y="1" width="12" height="14" rx=".800" fill="#5fc3ee"/><rect x="0" y="14.300" width="12" height="1.500" fill="#c0672a"/><path d="M1.500 0v2M3.800 0v2M6 0v2M8.300 0v2M10.500 0v2" stroke="#5fc3ee" stroke-width="1.100"/><path d="M2 5h8M2 7.700h8M2 10.400h8" stroke="#0f6f9f" stroke-width="1.300"/></svg>
<svg class="abs" style="left:348px;top:306px" width="17" height="17" viewBox="0 0 17 17"><path d="M1.400 5.400L12 14.600" stroke="#14ad8f" stroke-width="3" stroke-linecap="round"/><path d="M1.400 11L12 1.800" stroke="#14ad8f" stroke-width="3" stroke-linecap="round"/><path d="M3.100 9.800l2.300-2" stroke="#2c2c2c" stroke-width="1.100"/><path d="M11.600.300L12.700 0 16.300 1.800V14.600L12.700 16.400 11.600 16.100z" fill="#23c7a6"/><path d="M12 5.100l-3.700 3.100 3.700 3.100z" fill="#2c2c2c"/></svg>
<svg class="abs" style="left:348px;top:350px" width="17" height="17" viewBox="0 0 17 17"><path d="M1.400 5.400L12 14.600" stroke="#0c86d6" stroke-width="3" stroke-linecap="round"/><path d="M1.400 11L12 1.800" stroke="#0c86d6" stroke-width="3" stroke-linecap="round"/><path d="M11.600.300L12.700 0 16.300 1.800V14.600L12.700 16.400 11.600 16.100z" fill="#2aaaf5"/><path d="M12 5.100l-3.700 3.100 3.700 3.100z" fill="#2c2c2c"/></svg>
<svg class="abs" style="left:349px;top:460px" width="14" height="16" viewBox="0 0 14 16"><defs><clipPath id="cdf"><path d="M7 0L9.600 1.500 13.300 2.200V9.800L7 15.400.7 9.800V2.200L4.400 1.500z"/></clipPath></defs><g clip-path="url(#cdf)"><rect x="0" y="0" width="7" height="7.800" fill="#33b5f1"/><rect x="7" y="0" width="7" height="7.800" fill="#1186dc"/><rect x="0" y="7.800" width="7" height="8" fill="#0a6fcb"/><rect x="7" y="7.800" width="7" height="8" fill="#0f509c"/></g></svg>
<svg class="abs" style="left:347px;top:554px" width="17" height="16" viewBox="0 0 17 16"><path d="M1.500 4.600v8.500a.9.900 0 0 0 .9.900h9.600a.9.900 0 0 0 .9-.900v-2" fill="none" stroke="#f0f0f0" stroke-width="1.200"/><path d="M10.300 1l5.200 5.200-5.200 5.100V8.500C7.500 8.300 5.300 9 3.800 10.700c.5-3.600 2.700-6 6.500-6.400z" fill="none" stroke="#f0f0f0" stroke-width="1.100" stroke-linejoin="round"/></svg>
<div class="abs" style="left:336px;top:229.500px;width:280px;height:32.500px;border:4.200px solid #e21c1c"></div>

<div class="t ss" id="st0" style="left:12px;top:841px">2 items</div>
<div class="abs" style="left:60px;top:842px;width:1px;height:13px;background:#e8e8e8"></div>
<div class="t ss" id="st1" style="left:71px;top:841px">1 item selected&nbsp; 243 MB</div>
<div class="abs" style="left:205px;top:842px;width:1px;height:13px;background:#e8e8e8"></div>
<!-- view toggles -->
<svg class="abs" style="left:1376px;top:841px" width="16" height="16" viewBox="0 0 16 16"><rect x=".5" y=".5" width="15" height="15" rx="2" fill="#cacaca" stroke="#b2b2b2" stroke-width="1"/><path d="M2.200 3.500h11.600M2.200 6.500h11.600M2.200 9.500h11.600M2.200 12.500h11.600" stroke="#000" stroke-width="1"/></svg>
<svg class="abs" style="left:1400px;top:841px" width="16" height="16" viewBox="0 0 16 16"><rect x=".5" y=".5" width="15" height="15" rx="2" fill="#cacaca" stroke="#b2b2b2" stroke-width="1"/><rect x="2.600" y="2.600" width="10.800" height="8.800" rx=".800" fill="#fff" stroke="#000" stroke-width="1"/><path d="M2.200 13.500h11.600" stroke="#000" stroke-width="1"/></svg>


</div></div>
</body>
</html>
